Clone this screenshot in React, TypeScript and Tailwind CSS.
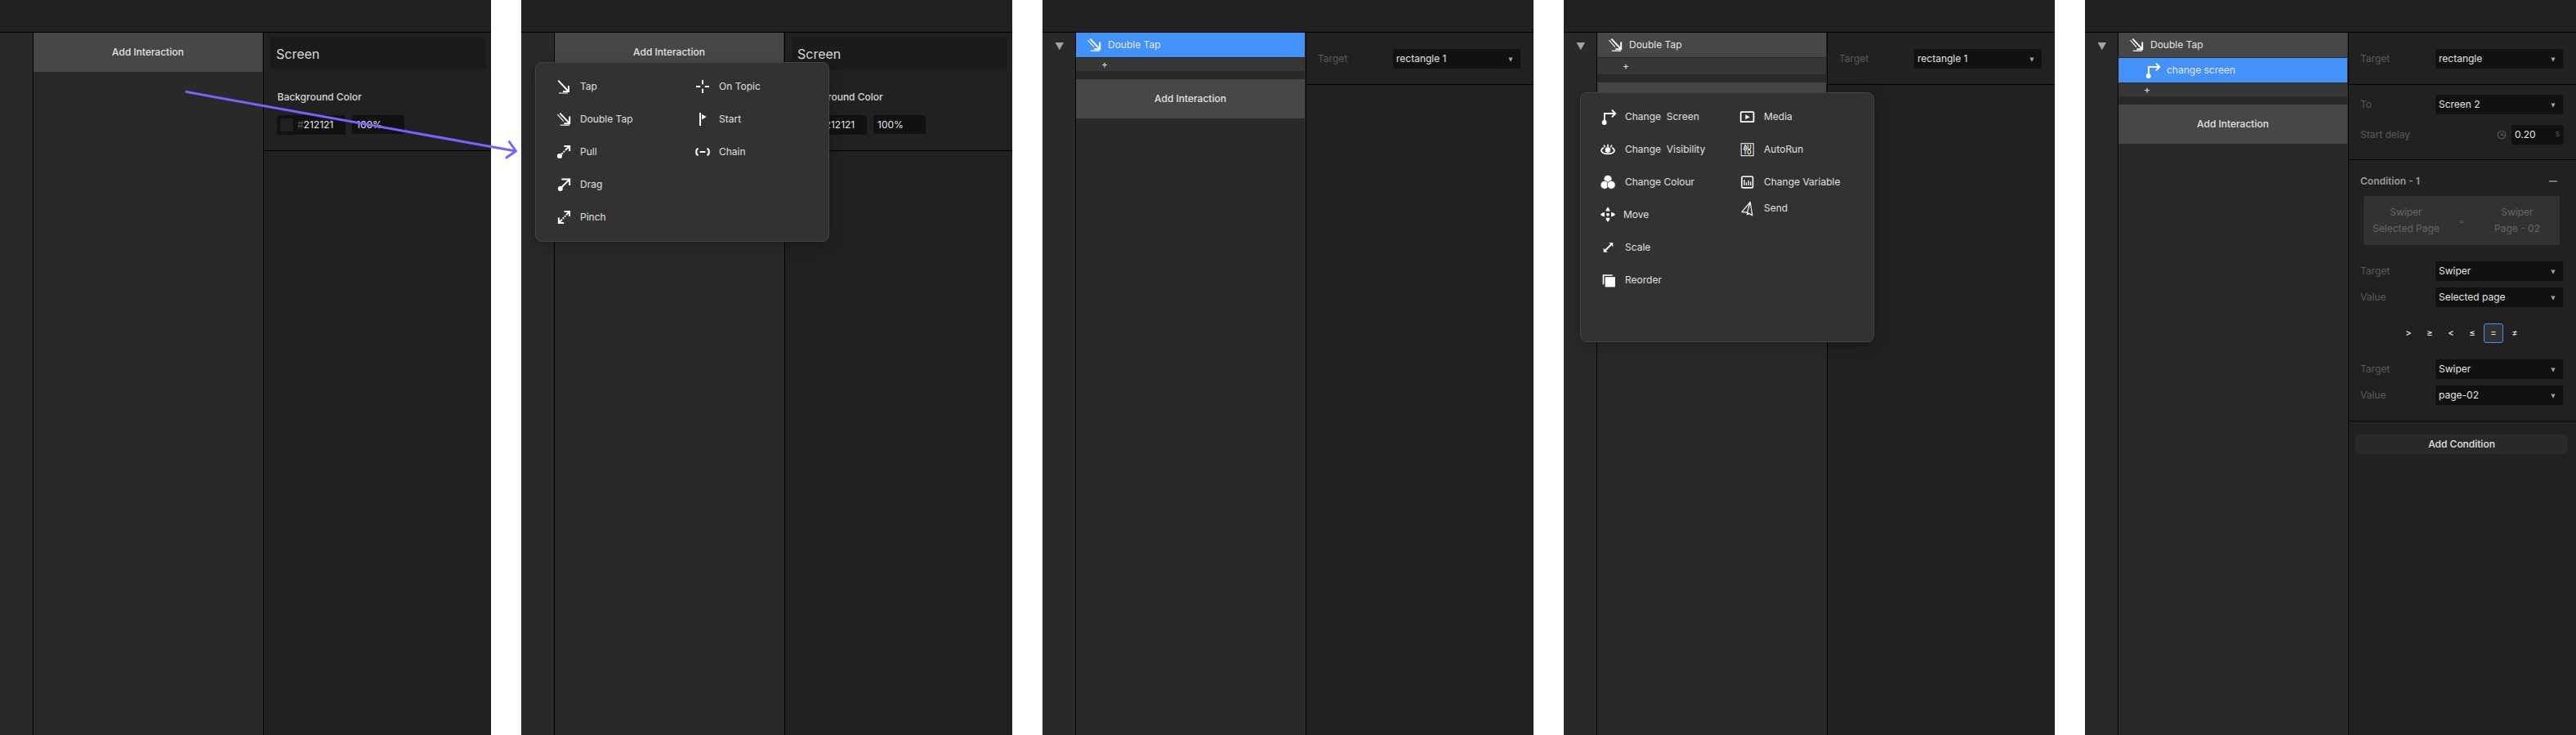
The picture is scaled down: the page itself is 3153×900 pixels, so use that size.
import type { ReactNode } from 'react';

/* ---------- icons, all on an 18 × 18 grid ---------- */

function Icon({ children }: { children: ReactNode }) {
  return (
    <svg width="18" height="18" viewBox="0 0 18 18" fill="none" stroke="#fff" strokeWidth="2" className="shrink-0 overflow-visible">
      {children}
    </svg>
  );
}

const TapIcon = () => (
  <Icon>
    <path d="M2.3 1.6 14 14M15 8v7H8" />
    <path d="M3 17h11" stroke="#999" />
  </Icon>
);

const DoubleTapIcon = () => (
  <Icon>
    <path d="M4.3 1.6 15.7 13.6M16.2 5.6v8.6H9.4" />
    <path d="M1.4 3.2 9 11.6" strokeWidth="1.1" />
    <path d="M4.8 16.2h11.2" strokeWidth="1.2" />
  </Icon>
);

const PullIcon = () => (
  <Icon>
    <circle cx="4" cy="14" r="3.1" fill="#fff" stroke="none" />
    <path d="M6.4 11.6 16 2" strokeDasharray="2 1.2 2 1.2 20" />
    <path d="M9.4 2h6.8v6" />
  </Icon>
);

const DragIcon = () => (
  <Icon>
    <circle cx="4.8" cy="14" r="3" fill="#fff" stroke="none" />
    <path d="M5 13.6 16 2.8M6.4 2.5h9.8v7.6" />
  </Icon>
);

const PinchIcon = () => (
  <Icon>
    <path d="M9.6 1.9h6.5v6M2.9 9.4v6.6h6.3" />
    <path d="M16 2 3 15.9" strokeDasharray="5.8 1.2 1.9 1.2 1.9 1.2 8" />
  </Icon>
);

const TopicIcon = () => (
  <Icon>
    <path d="M9 1v5.200M9 11.800V17M1 9h5.200M11.800 9H17" strokeWidth="1.9" />
  </Icon>
);

const StartIcon = () => (
  <Icon>
    <path d="M6 1v16" />
    <path d="M8 3v6.400l5.700-3.400z" fill="#fff" stroke="none" />
  </Icon>
);

const ChainIcon = () => (
  <Icon>
    <path d="M3.600 5C.4 5.600.4 12.400 3.600 13M14.400 5c3.200.6 3.200 7.400 0 8M5.600 9h6.800" />
  </Icon>
);

const ChangeScreenIcon = () => (
  <Icon>
    <circle cx="4.700" cy="16" r="2.900" fill="#fff" stroke="none" />
    <path d="M4.900 15V5H18M13.900.7 18.200 5l-4.300 4.300" strokeWidth="1.900" />
  </Icon>
);

const VisibilityIcon = () => (
  <Icon>
    <circle cx="9" cy="9.600" r="3.300" fill="#fff" stroke="none" />
    <path d="M3.800 6.900C-1.600 9.800 1.400 14.300 9 14.300s10.600-4.500 5.200-7.400" strokeWidth="1.800" />
    <path d="M9 2.700v3.200M4.200 3.700 5.700 6.300M13.800 3.700 12.300 6.300" strokeWidth="1.600" />
  </Icon>
);

const ColourIcon = () => (
  <Icon>
    <g fill="#fff" stroke="#323232" strokeWidth=".8">
      <circle cx="9" cy="5.400" r="5" />
      <circle cx="5" cy="12.400" r="5" />
      <circle cx="13.200" cy="12.400" r="5" />
    </g>
  </Icon>
);

const MoveIcon = () => (
  <Icon>
    <g fill="#fff" stroke="none">
      <rect x="7.300" y="7" width="3.400" height="3.400" rx=".8" />
      <path d="M9-.4C10.200.8 11.600 3 11.600 4.600H6.400C6.400 3 7.800.8 9-.4zM9 17.800c1.200-1.200 2.600-3.400 2.600-5H6.400c0 1.600 1.400 3.800 2.600 5zM-.1 8.700c1.200-1.200 3.400-2.600 5-2.600v5.200c-1.600 0-3.800-1.400-5-2.600zM18.100 8.700c-1.200-1.200-3.400-2.600-5-2.600v5.200c1.600 0 3.800-1.400 5-2.600z" />
    </g>
  </Icon>
);

const ScaleIcon = () => (
  <Icon>
    <path d="M5.200 13.200 13.800 4.600" />
    <path d="M10.400 3.300h4.900v4.900zM3.700 9.800v4.900h4.900z" fill="#fff" stroke="none" />
  </Icon>
);

const ReorderIcon = () => (
  <Icon>
    <path d="M14.700 3H3.500v11.300" strokeWidth="1.700" />
    <rect x="5.700" y="5.200" width="12.200" height="12.200" fill="#fff" stroke="none" />
  </Icon>
);

const MediaIcon = () => (
  <Icon>
    <rect x="1.700" y="3.200" width="15.800" height="12" rx="1" strokeWidth="1.800" />
    <path d="M7.400 6.200v6l5.400-3z" fill="#fff" stroke="none" />
  </Icon>
);

const AutoRunIcon = () => (
  <Icon>
    <rect x="2.200" y="1.700" width="15" height="15" strokeWidth="1" />
    <g fill="#fff" stroke="none" fontFamily="Inter, sans-serif" fontSize="7" fontWeight="600" textAnchor="middle">
      <text x="9.700" y="9">AU</text>
      <text x="9.700" y="15.200">TO</text>
    </g>
  </Icon>
);

const VariableIcon = () => (
  <Icon>
    <rect x="2.900" y="2.300" width="13.600" height="13.600" rx="1.200" strokeWidth="1.600" />
    <path d="M6 6v7M8.500 9.300V13M11.200 7v6M13.700 8.600V13" strokeWidth="1.300" />
  </Icon>
);

const SendIcon = () => (
  <Icon>
    <path d="M13.200 1.400 3 13.600l6.600.6 6.200 3.400zM13.200 1.400 9.600 14.200v2.400l2.400-1.200" strokeWidth="1.200" strokeLinejoin="round" />
  </Icon>
);

const ClockIcon = () => (
  <svg width="12" height="12" viewBox="0 0 12 12" fill="none" stroke="#5e5e5e" className="shrink-0">
    <circle cx="6" cy="6" r="4.700" strokeWidth="1.100" />
    <path d="M6 3v3.400h2.600" strokeWidth="1.100" />
  </svg>
);

/* ---------- inspector pieces ---------- */

function Field({ children }: { children: ReactNode }) {
  return (
    <div className="flex h-6 w-[156px] items-center justify-between rounded-[2px] bg-[#111] pr-[9px] pl-1 text-[#e4e4e4]">
      {children}
      <svg width="6" height="6" viewBox="0 0 6 6" className="mt-px fill-[#a3a3a3]">
        <path d="M.4.500h5.200L3 5.700z" />
      </svg>
    </div>
  );
}

function LabelledField({ label, value, className = '' }: { label: string; value: string; className?: string }) {
  return (
    <div className={`flex items-center justify-between pr-4 pl-[14px] ${className}`}>
      <span className="text-[#5a5a5a]">{label}</span>
      <Field>{value}</Field>
    </div>
  );
}

function TargetSection({ value }: { value: string }) {
  return (
    <section className="h-16 border-b border-black pt-5">
      <LabelledField label="Target" value={value} />
    </section>
  );
}

function ScreenInspector() {
  return (
    <section className="flow-root h-[145px] border-b border-black">
      <div className="mt-1.5 ml-2 flex h-10 w-[264px] items-center rounded-[3px] bg-[#1b1b1b] pl-[7px] text-base text-[#d8d8d8]">Screen</div>
      <div className="mt-[25px] ml-[16.5px] leading-4 font-medium text-[#d8d8d8]">Background Color</div>
      <div className="mt-[14px] ml-4 flex gap-2 text-[#e4e4e4]">
        <div className="flex h-6 w-[84px] items-center rounded-[2px] bg-[#111] pl-1">
          <div className="mr-[5px] size-4 rounded-[1px] bg-[#212121]" />
          <span className="text-[#5a5a5a]">#</span>212121
        </div>
        <div className="flex h-[23px] w-16 items-center rounded-[2px] bg-[#111] pl-[5px]">100%</div>
      </div>
    </section>
  );
}

const operators = ['>', '≥', '<', '≤', '=', '≠'];

function ConditionInspector() {
  return (
    <>
      <TargetSection value="rectangle" />
      <section className="h-[92px] border-b border-black pt-3">
        <LabelledField label="To" value="Screen 2" />
        <div className="mt-[13px] flex items-center pr-[15px] pl-[14px]">
          <span className="-mt-px flex-1 text-[#5a5a5a]">Start delay</span>
          <ClockIcon />
          <div className="ml-[6px] flex h-6 w-16 items-center justify-between rounded-[2px] bg-[#111] pr-[5px] pl-1 text-[#e4e4e4]">
            0.20 <span className="-mt-0.5 text-[10px] text-[#5a5a5a]">s</span>
          </div>
        </div>
      </section>
      <section className="flow-root h-80 border-b border-black">
        <div className="mt-[18px] flex h-4 items-center justify-between pr-[23px] pl-[14px] font-semibold text-[#999]">
          Condition - 1
          <span className="h-[1.5px] w-[10px] bg-[#777]" />
        </div>
        <div className="mt-[10px] ml-[18px] grid h-[60px] w-60 grid-cols-[104px_32px_104px] items-center rounded-[2px] bg-[#323232] text-center leading-5 text-[#666]">
          <div>Swiper<br />Selected Page</div>
          <div className="text-[10px]">=</div>
          <div>Swiper<br />Page - 02</div>
        </div>
        <LabelledField label="Target" value="Swiper" className="mt-5" />
        <LabelledField label="Value" value="Selected page" className="mt-2" />
        <div className="mt-5 flex justify-center gap-0.5 pr-0.5 text-[11px] font-medium text-[#e4e4e4]">
          {operators.map((op) => (
            <span
              key={op}
              className={`flex size-6 items-center justify-center rounded-[3px] border pb-px ${op === '=' ? 'border-[#4392f9] bg-[#323232]' : 'border-transparent'}`}
            >
              {op}
            </span>
          ))}
        </div>
        <LabelledField label="Target" value="Swiper" className="mt-5" />
        <LabelledField label="Value" value="page-02" className="mt-2" />
      </section>
      <button className="mt-4 ml-2 block h-6 w-[260px] rounded-[3px] bg-[#292929] font-medium text-[#e4e4e4]">Add Condition</button>
    </>
  );
}

/* ---------- interaction column pieces ---------- */

function AddInteraction() {
  return <button className="flex h-12 w-full items-center justify-center bg-[#474747] font-medium text-[#e4e4e4]">Add Interaction</button>;
}

function TriggerRow({ active = false }: { active?: boolean }) {
  return (
    <div className={`flex h-[30px] items-center gap-2 pl-[13px] text-[#e4e4e4] ${active ? 'bg-[#4392f9]' : 'bg-[#474747]'}`}>
      <DoubleTapIcon />
      Double Tap
    </div>
  );
}

function PlusRow({ className = 'h-4' }: { className?: string }) {
  return <div className={`mt-px mb-[10px] flex items-center bg-[#373737] pl-[31px] text-xs leading-none text-[#e4e4e4] ${className}`}>+</div>;
}

/* ---------- popover menus ---------- */

type Entry = { label: string; icon: ReactNode; className?: string };

const triggers: Entry[][] = [
  [
    { label: 'Tap', icon: <TapIcon /> },
    { label: 'Double Tap', icon: <DoubleTapIcon /> },
    { label: 'Pull', icon: <PullIcon /> },
    { label: 'Drag', icon: <DragIcon /> },
    { label: 'Pinch', icon: <PinchIcon /> },
  ],
  [
    { label: 'On Topic', icon: <TopicIcon /> },
    { label: 'Start', icon: <StartIcon /> },
    { label: 'Chain', icon: <ChainIcon /> },
  ],
];

const responses: Entry[][] = [
  [
    { label: 'Change  Screen', icon: <ChangeScreenIcon /> },
    { label: 'Change  Visibility', icon: <VisibilityIcon /> },
    { label: 'Change Colour', icon: <ColourIcon /> },
    { label: 'Move', icon: <MoveIcon />, className: 'h-10 gap-[10px]' },
    { label: 'Scale', icon: <ScaleIcon /> },
    { label: 'Reorder', icon: <ReorderIcon /> },
  ],
  [
    { label: 'Media', icon: <MediaIcon /> },
    { label: 'AutoRun', icon: <AutoRunIcon /> },
    { label: 'Change Variable', icon: <VariableIcon /> },
    { label: 'Send', icon: <SendIcon />, className: 'h-6 gap-3' },
  ],
];

function Menu({ columns, className, rowClassName }: { columns: Entry[][]; className: string; rowClassName: string }) {
  return (
    <div className={`absolute z-10 grid w-[360px] grid-cols-[170px_1fr] rounded-lg border border-[#444] bg-[#323232] shadow-[0_4px_16px_rgba(0,0,0,0.25)] ${className}`}>
      {columns.map((entries, i) => (
        <div key={i} className="flex flex-col">
          {entries.map((entry) => (
            <div key={entry.label} className={`flex items-center whitespace-pre text-[#e0e0e0] ${entry.className ?? rowClassName}`}>
              {entry.icon}
              {entry.label}
            </div>
          ))}
        </div>
      ))}
    </div>
  );
}

/* ---------- frame ---------- */

function Frame({ column, inspector, expandable = false, overlay }: { column: ReactNode; inspector: ReactNode; expandable?: boolean; overlay?: ReactNode }) {
  return (
    <div className="relative flex h-[900px] w-[601px] shrink-0 flex-col bg-[#212121]">
      <header className="h-10 shrink-0 border-b border-black" />
      <div className="flex flex-1">
        <div className="w-[41px] border-r border-black bg-[#292929] pt-3 pl-[15px]">
          {expandable && (
            <svg width="12" height="10" viewBox="0 0 12 10" className="fill-[#a3a3a3]">
              <path d="M.500 0h10.600L5.800 9.300z" />
            </svg>
          )}
        </div>
        <div className="w-[282px] border-r border-black bg-[#292929] pr-px">{column}</div>
        <div className="w-[278px]">{inspector}</div>
      </div>
      {overlay}
    </div>
  );
}

export default function App() {
  return (
    <div className="relative flex h-[900px] w-[3153px] gap-[37px] overflow-hidden bg-white font-['Inter',sans-serif] text-xs">
      <Frame column={<AddInteraction />} inspector={<ScreenInspector />} />
      <Frame
        column={<AddInteraction />}
        inspector={<ScreenInspector />}
        overlay={<Menu columns={triggers} className="top-[76px] left-[17px] h-[220px] pt-[9px] pl-[25px]" rowClassName="h-10 gap-[11px]" />}
      />
      <Frame
        expandable
        column={
          <>
            <TriggerRow active />
            <PlusRow />
            <AddInteraction />
          </>
        }
        inspector={<TargetSection value="rectangle 1" />}
      />
      <Frame
        expandable
        column={
          <>
            <TriggerRow />
            <PlusRow className="h-5" />
            <AddInteraction />
          </>
        }
        inspector={<TargetSection value="rectangle 1" />}
        overlay={<Menu columns={responses} className="top-[113px] left-5 h-[306px] pt-[9px] pl-6" rowClassName="h-10 gap-3" />}
      />
      <Frame
        expandable
        column={
          <>
            <TriggerRow />
            <div className="mt-px flex h-[30px] items-center gap-[9px] bg-[#4392f9] pl-8 text-[#e4e4e4]">
              <ChangeScreenIcon />
              change screen
            </div>
            <PlusRow />
            <AddInteraction />
          </>
        }
        inspector={<ConditionInspector />}
      />
      <svg width="410" height="90" viewBox="0 0 410 90" fill="none" stroke="#7b61ff" strokeWidth="3" className="absolute top-[108px] left-[226px] z-20">
        <path d="M1 4.300 405 77" />
        <path d="M397.300 65.500 405.500 77l-11.600 8" strokeLinecap="round" strokeLinejoin="round" />
      </svg>
    </div>
  );
}
